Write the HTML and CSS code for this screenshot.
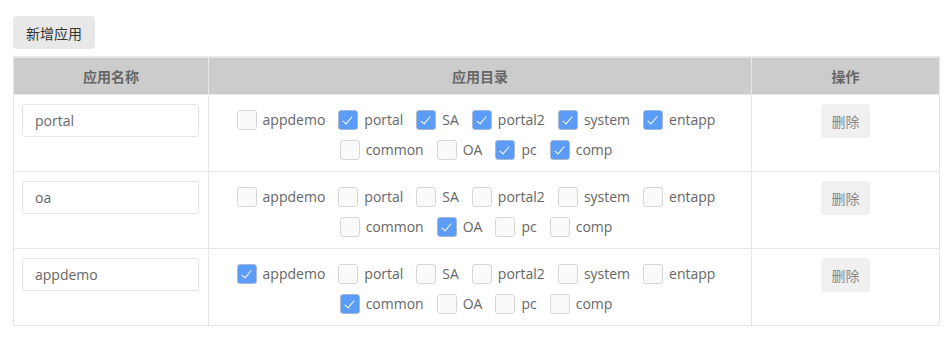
FILE: index.html
```html
<!DOCTYPE html>
<html>
<head>
<meta charset="utf-8">
<title>应用管理</title>
<link rel="stylesheet" href="styles.css">
</head>
<body>
<div class="page">
	<button class="btn-add">新增应用</button>
	<table class="apps">
	<tr>
		<th class="col-name">应用名称</th>
		<th class="col-dirs">应用目录</th>
		<th class="col-op">操作</th>
	</tr>
	<tr>
		<td class="cell-name"><input class="name-input" type="text" value="portal"></td>
		<td class="cell-dirs">
			<div class="dirs">
				<label class="dir"><span class="box"></span>appdemo</label>
				<label class="dir"><span class="box on"></span>portal</label>
				<label class="dir"><span class="box on"></span>SA</label>
				<label class="dir"><span class="box on"></span>portal2</label>
				<label class="dir"><span class="box on"></span>system</label>
				<label class="dir"><span class="box on"></span>entapp</label>
				<label class="dir"><span class="box"></span>common</label>
				<label class="dir"><span class="box"></span>OA</label>
				<label class="dir"><span class="box on"></span>pc</label>
				<label class="dir"><span class="box on"></span>comp</label>
			</div>
		</td>
		<td class="cell-op"><button class="btn-del">删除</button></td>
	</tr>
	<tr>
		<td class="cell-name"><input class="name-input" type="text" value="oa"></td>
		<td class="cell-dirs">
			<div class="dirs">
				<label class="dir"><span class="box"></span>appdemo</label>
				<label class="dir"><span class="box"></span>portal</label>
				<label class="dir"><span class="box"></span>SA</label>
				<label class="dir"><span class="box"></span>portal2</label>
				<label class="dir"><span class="box"></span>system</label>
				<label class="dir"><span class="box"></span>entapp</label>
				<label class="dir"><span class="box"></span>common</label>
				<label class="dir"><span class="box on"></span>OA</label>
				<label class="dir"><span class="box"></span>pc</label>
				<label class="dir"><span class="box"></span>comp</label>
			</div>
		</td>
		<td class="cell-op"><button class="btn-del">删除</button></td>
	</tr>
	<tr>
		<td class="cell-name"><input class="name-input" type="text" value="appdemo"></td>
		<td class="cell-dirs">
			<div class="dirs">
				<label class="dir"><span class="box on"></span>appdemo</label>
				<label class="dir"><span class="box"></span>portal</label>
				<label class="dir"><span class="box"></span>SA</label>
				<label class="dir"><span class="box"></span>portal2</label>
				<label class="dir"><span class="box"></span>system</label>
				<label class="dir"><span class="box"></span>entapp</label>
				<label class="dir"><span class="box on"></span>common</label>
				<label class="dir"><span class="box"></span>OA</label>
				<label class="dir"><span class="box"></span>pc</label>
				<label class="dir"><span class="box"></span>comp</label>
			</div>
		</td>
		<td class="cell-op"><button class="btn-del">删除</button></td>
	</tr>
	</table>
</div>
</body>
</html>
```

FILE: styles.css
```css
body {
	margin: 0;
	font-family: "Open Sans", "Noto Sans CJK SC", sans-serif;
	font-size: 14px;
	color: #666;
	background: #fff;
}
.page {
	padding: 16px 10px 0 13px;
}
button {
	font-family: "Open Sans", "Noto Sans CJK SC", sans-serif;
	border: 0;
	cursor: pointer;
}
.btn-add {
	display: block;
	width: 82px;
	height: 33px;
	padding: 0;
	border-radius: 4px;
	background: #e8e8e8;
	color: #333;
	font-size: 14px;
}
.apps {
	margin-top: 7px;
	width: 927px;
	border-collapse: collapse;
	table-layout: fixed;
	border: 1px solid #e4e4ea;
}
.apps th {
	height: 36px;
	padding: 0;
	background: #cccccc;
	color: #666;
	font-size: 14px;
	font-weight: bold;
	border: 1px solid #e8e8e8;
	border-top-width: 2px;
}
.apps td {
	padding: 0;
	vertical-align: top;
	border: 1px solid #e4e4ea;
}
.col-name {
	width: 194px;
}
.col-op {
	width: 187px;
}
.apps .cell-name {
	padding: 9px 8px 0 8px;
}
.name-input {
	box-sizing: border-box;
	display: block;
	width: 177px;
	height: 33px;
	padding: 0 12px;
	border: 1px solid #e5e5e5;
	border-radius: 3px;
	font-family: "Open Sans", sans-serif;
	font-size: 14px;
	color: #666;
	outline: none;
}
.apps .cell-dirs {
	padding: 10px 0 6px 0;
}
.dirs {
	display: flex;
	flex-wrap: wrap;
	justify-content: center;
	column-gap: 13px;
	padding: 0 20px 0 12px;
}
.dir {
	display: flex;
	align-items: center;
	height: 30px;
	line-height: 30px;
}
.box {
	box-sizing: border-box;
	position: relative;
	width: 20px;
	height: 20px;
	margin-right: 6px;
	border: 1px solid #d6d6d6;
	border-radius: 3px;
	background: #fafafa;
}
.box.on {
	background: #5b9cf8;
	border-color: #a9b9d3;
}
.box.on::after {
	content: "";
	position: absolute;
	left: 6px;
	top: 3px;
	width: 4px;
	height: 9px;
	border-right: 1.5px solid #fff;
	border-bottom: 1.5px solid #fff;
	transform: rotate(40deg);
}
.apps .cell-op {
	text-align: center;
	padding-top: 9px;
}
.btn-del {
	width: 49px;
	height: 34px;
	padding: 0;
	border-radius: 4px;
	background: #f0f0f0;
	color: #888;
	font-size: 14px;
}
```
